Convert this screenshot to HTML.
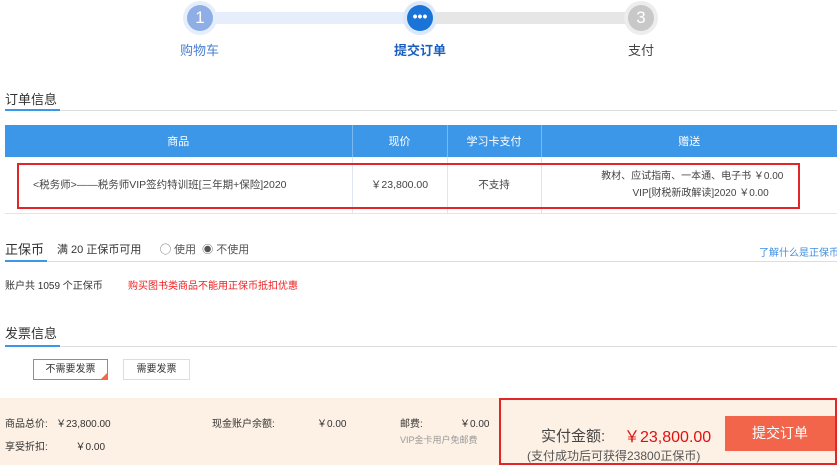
<!DOCTYPE html>
<html><head><meta charset="utf-8"><style>
*{margin:0;padding:0;box-sizing:border-box}
body{width:837px;height:465px;overflow:hidden;background:#fff;font-family:"Liberation Sans","Noto Sans CJK SC",sans-serif;font-size:11px;color:#333;position:relative}
.a{position:absolute;white-space:nowrap}
.c{border-radius:50%;text-align:center;color:#fff}
table{border-collapse:collapse;position:absolute;left:5px;top:125px;width:832px}
th{background:#3d97e8;color:#fff;font-weight:normal;height:32px;border-right:1px solid #7ab8f0;font-size:11px}
td{height:56px;text-align:center;border-right:1px solid #dde6f0;border-bottom:1px solid #dde6f0;font-size:10.5px;color:#444}
</style></head><body>
<div class="a" style="left:200px;top:12px;width:220px;height:12px;background:#e6eefb"></div>
<div class="a" style="left:420px;top:12px;width:221px;height:12px;background:#e6e6e6"></div>
<div class="a c" style="left:183px;top:1px;width:34px;height:34px;background:#e6eefb"></div>
<div class="a c" style="left:187px;top:5px;width:26px;height:26px;background:#8faee6;font-size:17px;line-height:26px">1</div>
<div class="a c" style="left:403px;top:1px;width:34px;height:34px;background:#dbe8fb"></div>
<div class="a c" style="left:407px;top:5px;width:26px;height:26px;background:#1a74d8;font-size:14px;line-height:22px;font-weight:bold">•••</div>
<div class="a c" style="left:624px;top:1px;width:34px;height:34px;background:#ededed"></div>
<div class="a c" style="left:628px;top:5px;width:26px;height:26px;background:#c8c8c8;font-size:17px;line-height:26px">3</div>
<div class="a" style="left:180px;top:40px;font-size:13px;color:#4a7fd0">购物车</div>
<div class="a" style="left:394px;top:40px;font-size:13px;color:#1a5fbf;font-weight:bold">提交订单</div>
<div class="a" style="left:628px;top:40px;font-size:13px;color:#444">支付</div>
<div class="a" style="left:5px;top:89px;font-size:13px">订单信息</div>
<div class="a" style="left:5px;top:110px;width:832px;height:1px;background:#ddd"></div>
<div class="a" style="left:5px;top:109px;width:55px;height:2px;background:#3d97e8"></div>
<table><tr><th style="width:347px">商品</th><th style="width:95px">现价</th><th style="width:94px">学习卡支付</th><th style="border-right:0">赠送</th></tr>
<tr><td style="text-align:left;padding-left:28px">&lt;税务师&gt;——税务师VIP签约特训班[三年期+保险]2020</td><td>￥23,800.00</td><td>不支持</td><td style="border-right:0;line-height:17px;font-size:10px;text-align:center;padding-left:6px">教材、应试指南、一本通、电子书 ￥0.00<br>&nbsp;&nbsp;&nbsp;&nbsp;&nbsp;&nbsp;VIP[财税新政解读]2020 ￥0.00</td></tr></table>
<div class="a" style="left:17px;top:163px;width:783px;height:46px;border:2px solid #e02626"></div>
<div class="a" style="left:5px;top:239px;font-size:13px">正保币</div>
<div class="a" style="left:57px;top:241px">满 20 正保币可用</div>
<div class="a" style="left:160px;top:241px;color:#555">◯ 使用 &nbsp;◉ 不使用</div>
<div class="a" style="left:759px;top:244px;color:#3d8fe0;font-size:10px">了解什么是正保币</div>
<div class="a" style="left:5px;top:261px;width:832px;height:1px;background:#ddd"></div>
<div class="a" style="left:5px;top:260px;width:42px;height:2px;background:#3d97e8"></div>
<div class="a" style="left:5px;top:277px;font-size:10px">账户共 1059 个正保币</div>
<div class="a" style="left:128px;top:277px;font-size:10px;color:#f02020">购买图书类商品不能用正保币抵扣优惠</div>
<div class="a" style="left:5px;top:323px;font-size:13px">发票信息</div>
<div class="a" style="left:5px;top:346px;width:832px;height:1px;background:#ddd"></div>
<div class="a" style="left:5px;top:345px;width:55px;height:2px;background:#3d97e8"></div>
<div class="a" style="left:33px;top:359px;width:75px;height:21px;border:1px solid #f06a4a;text-align:center;line-height:19px;font-size:10px">不需要发票</div>
<div class="a" style="left:100px;top:372px;width:0;height:0;border-left:8px solid transparent;border-bottom:8px solid #f06a4a"></div>
<div class="a" style="left:123px;top:359px;width:67px;height:21px;border:1px solid #ddd;text-align:center;line-height:19px;font-size:10px">需要发票</div>
<div class="a" style="left:0;top:398px;width:837px;height:67px;background:#fdf0e4"></div>
<div class="a" style="left:5px;top:415px;font-size:10px">商品总价: &nbsp;&nbsp;￥23,800.00</div>
<div class="a" style="left:5px;top:438px;font-size:10px">享受折扣: &nbsp;&nbsp;&nbsp;&nbsp;&nbsp;&nbsp;&nbsp;&nbsp;&nbsp;￥0.00</div>
<div class="a" style="left:212px;top:415px;font-size:10px">现金账户余额:</div>
<div class="a" style="left:317px;top:415px;font-size:10px">￥0.00</div>
<div class="a" style="left:400px;top:415px;font-size:10px">邮费:</div>
<div class="a" style="left:460px;top:415px;font-size:10px">￥0.00</div>
<div class="a" style="left:400px;top:433px;font-size:9px;color:#999">VIP金卡用户免邮费</div>
<div class="a" style="left:499px;top:398px;width:338px;height:67px;border:2px solid #e02626"></div>
<div class="a" style="left:541px;top:425px;font-size:15px;color:#444">实付金额:</div>
<div class="a" style="left:624px;top:423px;font-size:16px;color:#e01010">￥23,800.00</div>
<div class="a" style="left:527px;top:447px;font-size:12px;color:#555">(支付成功后可获得23800正保币)</div>
<div class="a" style="left:725px;top:416px;width:110px;height:35px;background:#f2654a;color:#fff;font-size:14px;text-align:center;line-height:35px">提交订单</div>
</body></html>
